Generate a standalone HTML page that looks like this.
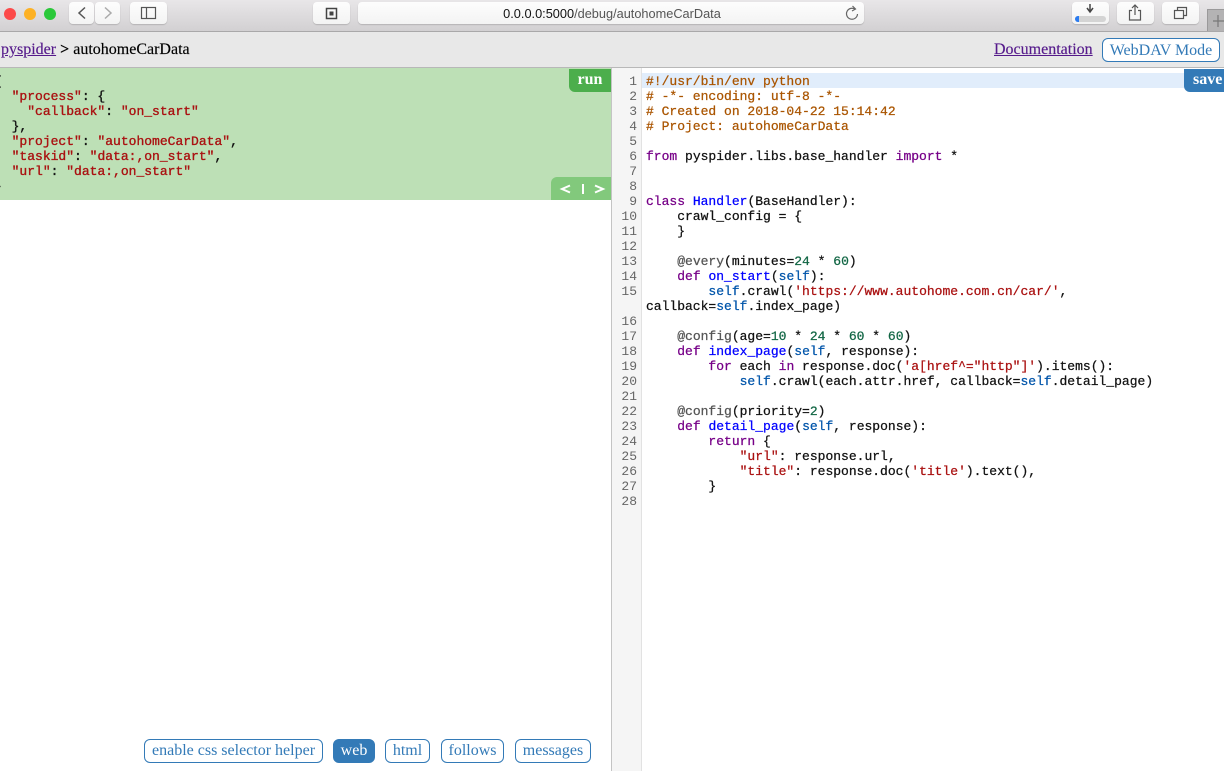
<!DOCTYPE html>
<html><head><meta charset="utf-8"><style>
html,body{margin:0;padding:0;width:1224px;height:771px;overflow:hidden;background:#fff}
body{position:relative;font-family:"Liberation Serif",serif;filter:blur(.3px)}
.a{position:absolute}
.tb{left:0;top:0;width:1224px;height:31px;background:linear-gradient(#e8e6e8,#d2d0d2);border-bottom:1px solid #a9a8a9}
.dot{position:absolute;top:8px;width:12px;height:12px;border-radius:50%}
.b{position:absolute;top:2px;height:22px;background:linear-gradient(#fdfdfd,#f3f3f3);border-radius:4px;box-shadow:0 1px 1px #b5b3b5}
.hd{left:0;top:32px;width:1224px;height:35px;background:#e8e8e8;border-bottom:1px solid #b8b8b8}
a{color:#551a8b;text-decoration:underline}
.c,.n{position:absolute;font:13px/15px "Liberation Mono",monospace;white-space:pre;-webkit-text-stroke:.25px currentColor}
.c{left:646px;color:#111}
.n{left:611px;width:26px;text-align:right;color:#666;-webkit-text-stroke:0}
.j{position:absolute;left:-4px;font:13px/15px "Liberation Mono",monospace;white-space:pre;color:#111;-webkit-text-stroke:.35px currentColor}
.j i{font-style:normal;color:#a11}
.k{color:#708}.f{color:#00f}.v{color:#05a}.s{color:#a11}.m{color:#164}.h{color:#a50}.d{color:#555}
.btn{position:absolute;top:739px;height:24px;box-sizing:border-box;border:1px solid #337ab7;border-radius:6px;color:#337ab7;font-size:16px;line-height:22px;text-align:center;background:#fff}
</style></head><body>
<div class="a tb"></div>
<div class="dot" style="left:4px;background:#fc4a4a"></div>
<div class="dot" style="left:24px;background:#fdb124"></div>
<div class="dot" style="left:44px;background:#2bc83a"></div>
<div class="b" style="left:69px;width:25px"></div>
<div class="b" style="left:95px;width:25px"></div>
<div class="b" style="left:130px;width:37px"></div>
<div class="b" style="left:313px;width:37px"></div>
<div class="b" style="left:358px;width:506px"></div>
<div class="b" style="left:1072px;width:37px"></div>
<div class="b" style="left:1117px;width:37px"></div>
<div class="b" style="left:1162px;width:37px"></div>
<div class="a" style="left:1207px;top:9px;width:17px;height:22px;background:#b4b3b4;border:1px solid #9a999a;border-width:1px 0 0 1px;box-sizing:border-box"></div>
<svg class="a" style="left:0;top:0" width="1224" height="32" fill="none" stroke="#555" stroke-width="1.2">
<path d="M85 7.500l-6 5.500 6 5.500" stroke-width="1.500"/><path d="M105 7.500l6 5.500-6 5.500" stroke="#aaa" stroke-width="1.500"/>
<rect x="141.500" y="7.500" width="14" height="11"/><path d="M146.500 7.500v11"/>
<rect x="326.500" y="8.500" width="10" height="10" stroke="#444" stroke-width="1.500"/><rect x="329.500" y="11.500" width="4" height="4" fill="#444" stroke="none"/>
<path d="M855.500 9.500a5.500 5.500 0 1 0 2 4.500M852.500 6l3 3-3.500 2" stroke="#666"/>
<path d="M1090 4v7M1087 8l3 4 3-4" stroke="#444" stroke-width="1.500"/>
<rect x="1075" y="16" width="31" height="6" rx="3" fill="#d4d4d4" stroke="none"/><path d="M1079 16h-1a3 3 0 0 0 0 6h1z" fill="#2a7bf0" stroke="none"/>
<path d="M1132 10.500h-2.500v9.500h11v-9.500H1138M1135 15V5M1132 8l3-3 3 3"/>
<rect x="1174.500" y="10.500" width="9" height="8"/><path d="M1177.500 10.500V7.500h9v8h-3"/>
<path d="M1213 21h11M1218 15v12" stroke="#777"/>
</svg>
<div class="a" style="left:359px;top:6px;width:506px;text-align:center;font:12.75px/16px 'Liberation Sans',sans-serif;color:#555"><span style="color:#111">0.0.0.0:5000</span>/debug/autohomeCarData</div>

<div class="a hd"></div>
<div class="a" style="left:1px;top:40px;font-size:16px;line-height:20px;color:#000;-webkit-text-stroke:.15px currentColor"><a>pyspider</a> <b>&gt;</b> autohomeCarData</div>
<div class="a" style="left:994px;top:40px;font-size:16px;line-height:20px;-webkit-text-stroke:.15px currentColor"><a>Documentation</a></div>
<div class="a" style="left:1102px;top:38px;width:118px;height:24px;box-sizing:border-box;border:1px solid #337ab7;border-radius:6px;background:#fff;color:#337ab7;font-size:16px;line-height:23px;text-align:center">WebDAV Mode</div>

<div class="a" style="left:0;top:68px;width:611px;height:132px;background:#bde0b6"></div>
<div class="j" style="top:74px;left:-6px">{</div>
<div class="j" style="top:89px">  <i>"process"</i>: {</div>
<div class="j" style="top:104px">    <i>"callback"</i>: <i>"on_start"</i></div>
<div class="j" style="top:119px">  },</div>
<div class="j" style="top:134px">  <i>"project"</i>: <i>"autohomeCarData"</i>,</div>
<div class="j" style="top:149px">  <i>"taskid"</i>: <i>"data:,on_start"</i>,</div>
<div class="j" style="top:164px">  <i>"url"</i>: <i>"data:,on_start"</i></div>
<div class="j" style="top:179px;left:-6px">}</div>
<div class="a" style="left:569px;top:69px;width:42px;height:23px;background:#4cae4c;border-radius:0 0 0 6px;color:#fff;font:bold 16px/21px 'Liberation Serif',serif;text-align:center">run</div>
<div class="a" style="left:551px;top:177px;width:60px;height:23px;background:#82c97c;border-radius:6px 0 0 0"></div>
<svg class="a" style="left:551px;top:177px" width="60" height="23" fill="none" stroke="#fff" stroke-width="2"><path d="M19 8.500l-8 3.500 8 3.500M32 7v10M44 8.500l8 3.500-8 3.500"/></svg>

<div class="a" style="left:611px;top:68px;width:1px;height:703px;background:#c4c4c4"></div>
<div class="a" style="left:612px;top:68px;width:29px;height:703px;background:#f5f5f5;border-right:1px solid #e2e2e2"></div>
<div class="a" style="left:642px;top:73px;width:582px;height:15px;background:#e1edfb"></div>
<div class="a" style="left:1184px;top:69px;width:40px;height:23px;background:#337ab7;border-radius:0 0 0 6px;color:#fff;font:bold 16px/21px 'Liberation Serif',serif;padding-left:9px;box-sizing:border-box;overflow:hidden">save</div>

<div class="n" style="top:74px">1
2
3
4
5
6
7
8
9
10
11
12
13
14
15

16
17
18
19
20
21
22
23
24
25
26
27
28</div>
<div class="c" style="top:74px"><span class="h">#!/usr/bin/env python
# -*- encoding: utf-8 -*-
# Created on 2018-04-22 15:14:42
# Project: autohomeCarData</span>

<span class="k">from</span> pyspider.libs.base_handler <span class="k">import</span> *


<span class="k">class</span> <span class="f">Handler</span>(BaseHandler):
    crawl_config = {
    }

    <span class="d">@every</span>(minutes=<span class="m">24</span> * <span class="m">60</span>)
    <span class="k">def</span> <span class="f">on_start</span>(<span class="v">self</span>):
        <span class="v">self</span>.crawl(<span class="s">'https://www.autohome.com.cn/car/'</span>,
callback=<span class="v">self</span>.index_page)

    <span class="d">@config</span>(age=<span class="m">10</span> * <span class="m">24</span> * <span class="m">60</span> * <span class="m">60</span>)
    <span class="k">def</span> <span class="f">index_page</span>(<span class="v">self</span>, response):
        <span class="k">for</span> each <span class="k">in</span> response.doc(<span class="s">'a[href^="http"]'</span>).items():
            <span class="v">self</span>.crawl(each.attr.href, callback=<span class="v">self</span>.detail_page)

    <span class="d">@config</span>(priority=<span class="m">2</span>)
    <span class="k">def</span> <span class="f">detail_page</span>(<span class="v">self</span>, response):
        <span class="k">return</span> {
            <span class="s">"url"</span>: response.url,
            <span class="s">"title"</span>: response.doc(<span class="s">'title'</span>).text(),
        }
</div>

<div class="btn" style="left:144px;width:179px">enable css selector helper</div>
<div class="btn" style="left:333px;width:42px;background:#337ab7;color:#fff">web</div>
<div class="btn" style="left:385px;width:45px">html</div>
<div class="btn" style="left:441px;width:63px">follows</div>
<div class="btn" style="left:515px;width:76px">messages</div>
</body></html>
